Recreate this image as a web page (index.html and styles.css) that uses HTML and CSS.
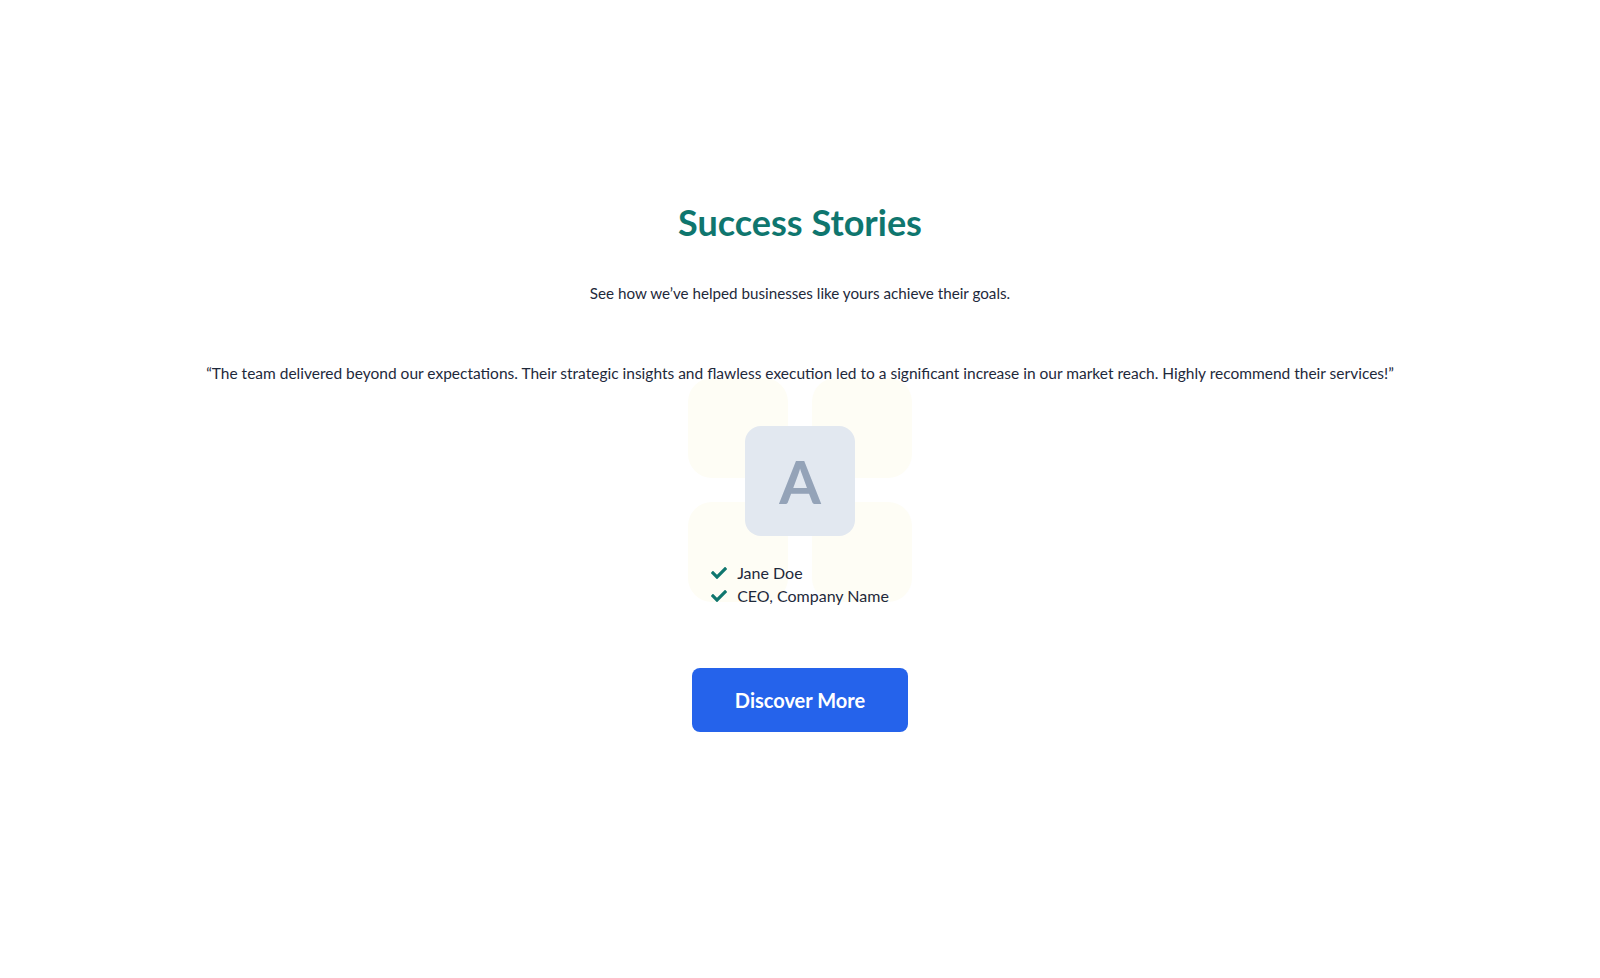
FILE: index.html
```html
<!DOCTYPE html>
<html lang="en">
<head>
<meta charset="utf-8">
<title>Success Stories</title>
<link rel="stylesheet" href="styles.css">
</head>
<body>
<section class="stories">
  <h2 class="title">Success Stories</h2>
  <p class="subtitle">See how we’ve helped businesses like yours achieve their goals.</p>
  <p class="quote">“The team delivered beyond our expectations. Their strategic insights and flawless execution led to a significant increase in our market reach. Highly recommend their services!”</p>
  <div class="author">
    <div class="decor">
      <span class="tile"></span><span class="tile"></span><span class="tile"></span><span class="tile"></span>
    </div>
    <div class="avatar">A</div>
    <ul class="meta">
      <li><svg class="check" viewBox="0 0 512 512" aria-hidden="true"><path d="M173.9 439.4l-166.4-166.4c-10-10-10-26.2 0-36.2l36.2-36.2c10-10 26.2-10 36.2 0L192 312.7 432.1 72.6c10-10 26.2-10 36.2 0l36.2 36.2c10 10 10 26.2 0 36.2L210.1 439.4c-10 10-26.2 10-36.2 0z"/></svg>Jane Doe</li>
      <li><svg class="check" viewBox="0 0 512 512" aria-hidden="true"><path d="M173.9 439.4l-166.4-166.4c-10-10-10-26.2 0-36.2l36.2-36.2c10-10 26.2-10 36.2 0L192 312.7 432.1 72.6c10-10 26.2-10 36.2 0l36.2 36.2c10 10 10 26.2 0 36.2L210.1 439.4c-10 10-26.2 10-36.2 0z"/></svg>CEO, Company Name</li>
    </ul>
  </div>
  <a class="btn" href="#">Discover More</a>
</section>
</body>
</html>
```
FILE: styles.css
```css
html, body {
  margin: 0;
  padding: 0;
  background: #ffffff;
}
body {
  font-family: "Lato", "Open Sans", sans-serif;
  color: #1e293b;
}
.stories {
  display: flex;
  flex-direction: column;
  align-items: center;
  padding-top: 202px;
  text-align: center;
}
.title {
  margin: 0;
  font-size: 36px;
  line-height: 40px;
  font-weight: 700;
  color: #0f766e;
}
.subtitle {
  margin: 39px 0 0;
  font-size: 15.2px;
  line-height: 24px;
}
.quote {
  position: relative;
  z-index: 2;
  margin: 56px 0 0;
  font-size: 15.5px;
  line-height: 24px;
}
.author {
  position: relative;
  margin-top: 41px;
  display: flex;
  flex-direction: column;
  align-items: center;
}
.decor {
  position: absolute;
  left: 50%;
  top: -48px;
  width: 224px;
  margin-left: -112px;
  display: grid;
  grid-template-columns: 100px 100px;
  grid-auto-rows: 100px;
  gap: 24px;
  z-index: 0;
}
.tile {
  background: #fefdf5;
  border-radius: 24px;
}
.avatar {
  position: relative;
  z-index: 1;
  width: 110px;
  height: 110px;
  border-radius: 16px;
  background: #e2e8f0;
  color: #94a3b8;
  font-size: 60px;
  font-weight: 700;
  display: flex;
  align-items: center;
  justify-content: center;
}
.meta {
  position: relative;
  z-index: 1;
  list-style: none;
  margin: 25px 0 0;
  padding: 0;
  text-align: left;
  font-size: 16px;
  line-height: 23px;
}
.meta li {
  display: flex;
  align-items: center;
  gap: 10px;
}
.check {
  width: 16px;
  height: 16px;
  fill: #0f766e;
}
.btn {
  margin-top: 61px;
  width: 216px;
  height: 64px;
  display: flex;
  align-items: center;
  justify-content: center;
  background: #2563eb;
  color: #ffffff;
  border-radius: 8px;
  font-size: 20px;
  font-weight: 700;
  text-decoration: none;
}
```
